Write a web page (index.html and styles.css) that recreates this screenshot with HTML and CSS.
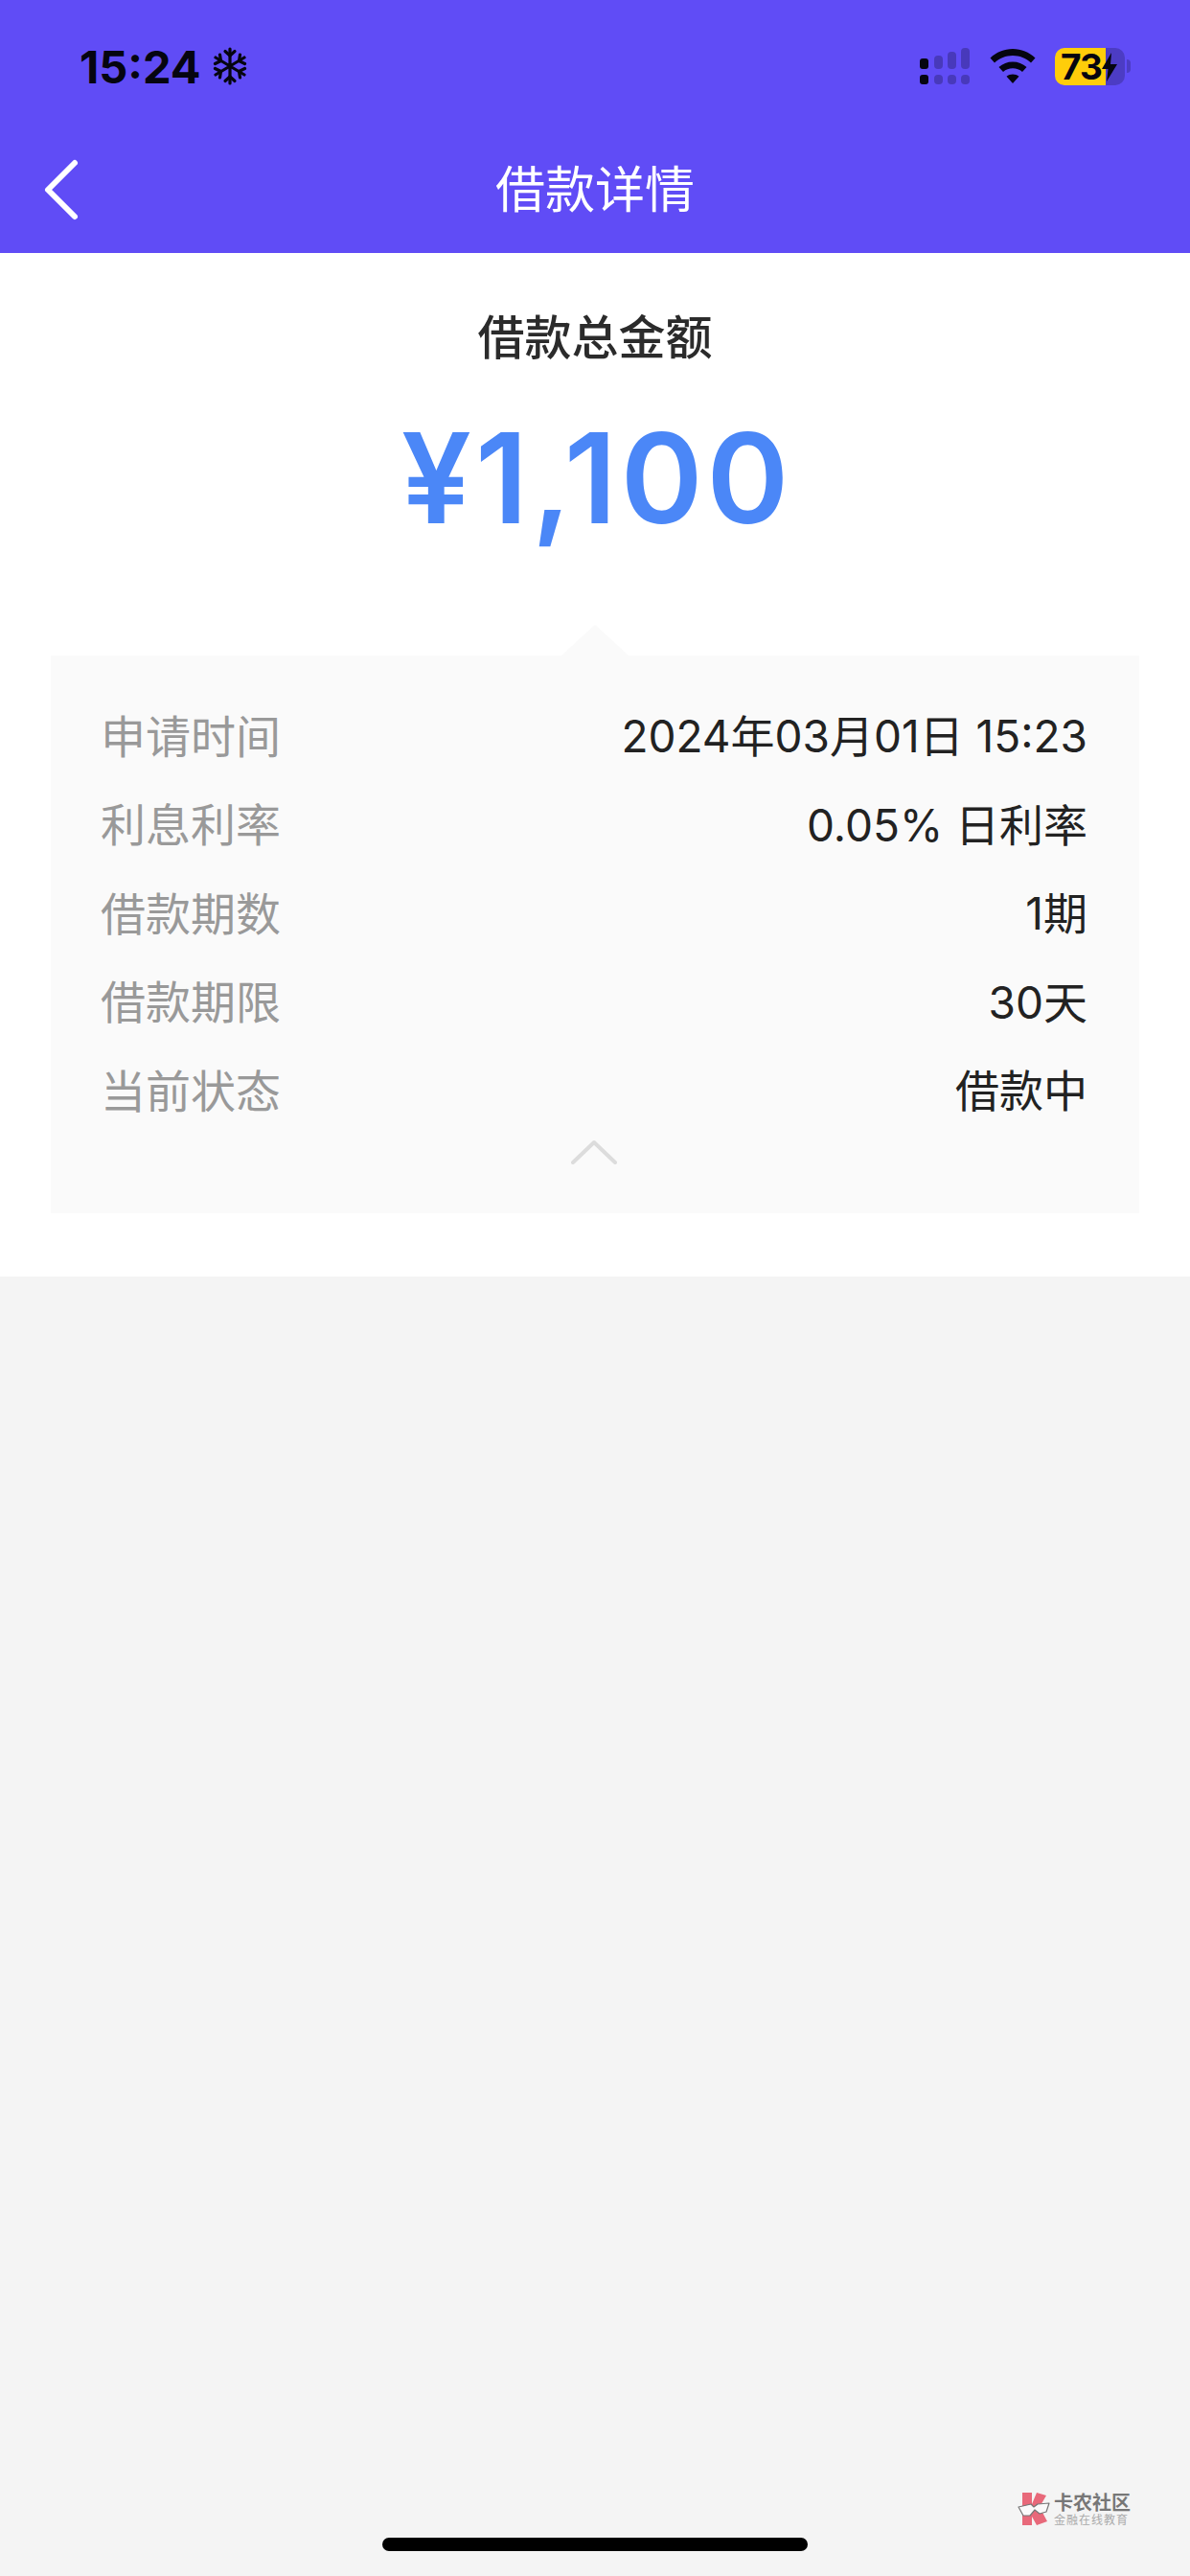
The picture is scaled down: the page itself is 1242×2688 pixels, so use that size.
FILE: index.html
```html
<!DOCTYPE html>
<html lang="en">
<head>
    <meta charset="UTF-8">
    <meta name="viewport" content="width=device-width, initial-scale=1.0">
    <title>借款详情</title>
    <link rel="stylesheet" href="styles.css">
</head>
<body>

    <!-- Status bar -->
    <div class="status">
        <div class="status-left">
            <span class="clock">15:24</span>
            <svg class="snow" viewBox="0 0 36 40" fill="none" stroke="#050510" stroke-width="3.2" stroke-linecap="round" stroke-linejoin="round">
                <path d="M18 2V38M3 11L33 29M33 11L3 29"/>
                <path d="M13 4.5L18 9L23 4.5M13 35.5L18 31L23 35.5"/>
                <path d="M2.5 17.5L8.5 14.5L7.5 8M33.5 22.5L27.5 25.5L28.5 32M33.5 17.5L27.5 14.5L28.5 8M2.5 22.5L8.5 25.5L7.5 32"/>
            </svg>
        </div>
        <div class="status-right">
            <svg class="signal" viewBox="0 0 54 38" fill="#050510">
                <g opacity="0.25">
                    <rect x="15" y="8" width="9" height="14" rx="4"/>
                    <rect x="29" y="4" width="9" height="18" rx="4"/>
                    <rect x="43" y="0" width="9" height="22" rx="4"/>
                    <rect x="15" y="28" width="9" height="10" rx="4"/>
                    <rect x="29" y="28" width="9" height="10" rx="4"/>
                    <rect x="43" y="28" width="9" height="10" rx="4"/>
                </g>
                <rect x="0" y="11" width="9" height="11" rx="3"/>
                <rect x="0" y="28" width="9" height="10" rx="3"/>
            </svg>
            <svg class="wifi" viewBox="0 0 48 36" fill="#050510">
                <path d="M24 0C33 0 41 3.500 47.500 9.500L43 14.500C37.800 9.700 31.200 7 24 7S10.200 9.700 5 14.500L.5 9.500C7 3.500 15 0 24 0Z"/>
                <path d="M24 13.500C29.500 13.500 34.500 15.500 38.500 19L34 24C31.200 21.600 27.800 20.300 24 20.300S16.800 21.600 14 24L9.500 19C13.500 15.500 18.500 13.500 24 13.500Z"/>
                <path d="M24 26.500C26.500 26.500 28.700 27.300 30.500 28.800L24 36L17.500 28.800C19.300 27.300 21.500 26.500 24 26.500Z"/>
            </svg>
            <div class="battery">
                <div class="battery-body">
                    <span class="battery-num">73</span>
                    <svg class="bolt" viewBox="0 0 16 30" fill="#050510"><path d="M10 0L0 17H6.500L5 30L16 12H9Z"/></svg>
                </div>
                <div class="battery-tip"></div>
            </div>
        </div>
    </div>

    <!-- Nav bar -->
    <div class="nav">
        <svg class="back" viewBox="0 0 40 66" fill="none" stroke="#fff" stroke-width="6" stroke-linecap="round" stroke-linejoin="round">
            <path d="M33 5L5 33L33 61"/>
        </svg>
        <div class="nav-title">借款详情</div>
    </div>

    <!-- Loan summary -->
    <div class="summary">
        <div class="summary-label">借款总金额</div>
        <div class="summary-amount">¥1,100</div>

        <div class="detail">
            <div class="row"><span class="row-key">申请时间</span><span class="row-val">2024年03月01日 15:23</span></div>
            <div class="row"><span class="row-key">利息利率</span><span class="row-val">0.05% 日利率</span></div>
            <div class="row"><span class="row-key">借款期数</span><span class="row-val">1期</span></div>
            <div class="row"><span class="row-key">借款期限</span><span class="row-val">30天</span></div>
            <div class="row"><span class="row-key">当前状态</span><span class="row-val">借款中</span></div>
            <svg class="collapse" viewBox="0 0 48 26" fill="none" stroke="#dcdcdc" stroke-width="4" stroke-linecap="round" stroke-linejoin="round">
                <path d="M2 24L24 3L46 24"/>
            </svg>
        </div>
    </div>

    <!-- Watermark -->
    <div class="mark">
        <svg class="mark-logo" viewBox="0 0 34 34">
            <path d="M5 0H15V12L20 0L30 3L23 15L31 30L20 34L15 25V34H5Z" fill="#e8697a"/>
            <path d="M1 15L14 12L17 15L21 12L33 11L30 20L23 22L18 18L13 24H6Z" fill="#fafafa" stroke="#777" stroke-width="1.200" stroke-linejoin="round"/>
        </svg>
        <div class="mark-text">
            <div class="mark-name">卡农社区</div>
            <div class="mark-sub">金融在线教育</div>
        </div>
    </div>

    <div class="home-bar"></div>

</body>
</html>
```

FILE: styles.css
```css
body {
    margin: 0;
    min-height: 2688px;
    background: #f4f4f4;
    font-family: Inter, "Noto Sans CJK SC", sans-serif;
    position: relative;
    overflow: hidden;
}

.status {
    height: 134px;
    padding: 4px 62px 0 83px;
    box-sizing: border-box;
    background: #604cf6;
    display: flex;
    justify-content: space-between;
    align-items: center;
}

.status-left {
    display: flex;
    align-items: center;
    gap: 12px;
}

.clock {
    font-size: 47px;
    font-weight: 700;
    color: #050510;
}

.snow {
    width: 36px;
    height: 40px;
}

.status-right {
    display: flex;
    align-items: center;
}

.signal {
    width: 54px;
    height: 38px;
    margin-right: 19px;
}

.wifi {
    width: 48px;
    height: 36px;
    margin-right: 20px;
}

.battery {
    display: flex;
    align-items: center;
    gap: 2px;
}

.battery-body {
    width: 73px;
    height: 39px;
    border-radius: 10px;
    background: linear-gradient(to right, #ffcd0a 53px, #4c3cc4 53px);
    display: flex;
    align-items: center;
    padding-left: 6px;
    box-sizing: border-box;
    position: relative;
}

.battery-num {
    font-size: 37px;
    font-weight: 700;
    line-height: 39px;
    letter-spacing: -1px;
    color: #050510;
}

.bolt {
    width: 16px;
    height: 30px;
    position: absolute;
    left: 49px;
    top: 5px;
}

.battery-tip {
    width: 4px;
    height: 14px;
    border-radius: 0 4px 4px 0;
    background: #4c3cc4;
}

.nav {
    height: 130px;
    background: #604cf6;
    display: flex;
    align-items: center;
    justify-content: center;
    position: relative;
}

.back {
    width: 40px;
    height: 66px;
    position: absolute;
    left: 45px;
    top: 31px;
}

.nav-title {
    font-size: 52px;
    color: #fff;
    margin-bottom: 9px;
}

.summary {
    background: #fff;
    padding: 0 53px 66px;
    display: flex;
    flex-direction: column;
    align-items: center;
}

.summary-label {
    margin-top: 56px;
    font-size: 49px;
    line-height: 66px;
    font-weight: 500;
    color: #2b2b2b;
}

.summary-amount {
    margin-top: 35px;
    margin-left: 4px;
    font-size: 130px;
    line-height: 156px;
    font-weight: 600;
    letter-spacing: 4px;
    color: #4b87f7;
}

.detail {
    position: relative;
    width: 100%;
    margin-top: 107px;
    padding: 35px 54px 0 52px;
    height: 582px;
    box-sizing: border-box;
    background: #fafafa;
}

/* little notch on top of the panel */
.detail::before {
    content: "";
    position: absolute;
    left: 533px;
    top: -32px;
    border-left: 35px solid transparent;
    border-right: 35px solid transparent;
    border-bottom: 32px solid #fafafa;
}

.row {
    display: flex;
    justify-content: space-between;
    align-items: center;
    height: 92.5px;
    font-size: 46px;
}

.row-key {
    font-size: 47px;
    color: #999;
}

.row-val {
    color: #222;
}

.collapse {
    display: block;
    width: 48px;
    height: 26px;
    margin: 7px auto 0;
}

.mark {
    position: absolute;
    left: 1062px;
    top: 2601px;
    display: flex;
    gap: 4px;
}

.mark-logo {
    width: 34px;
    height: 34px;
}

.mark-name {
    font-size: 20px;
    line-height: 22px;
    font-weight: 700;
    color: #777;
}

.mark-sub {
    font-size: 12px;
    line-height: 14px;
    color: #aaa;
    letter-spacing: 1px;
}

.home-bar {
    position: absolute;
    left: 399px;
    top: 2648px;
    width: 444px;
    height: 14px;
    border-radius: 7px;
    background: #000;
}
```
